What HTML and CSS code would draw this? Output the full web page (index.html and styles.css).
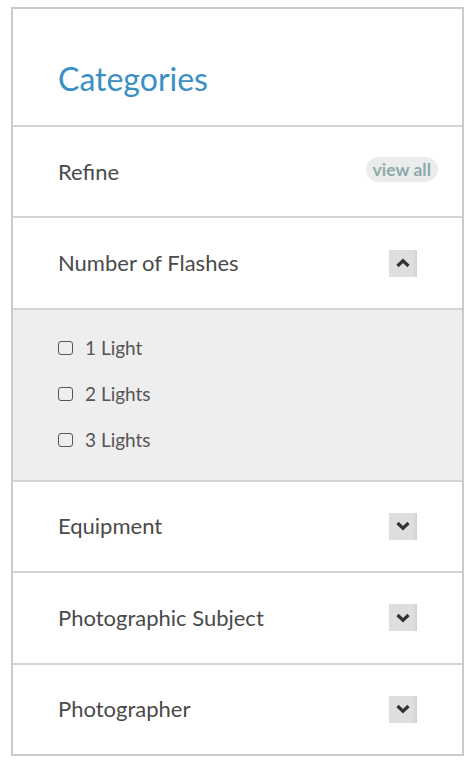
FILE: index.html
```html
<!DOCTYPE html>
<html lang="en">
<head>
<meta charset="utf-8">
<title>Categories</title>
<link rel="stylesheet" href="styles.css">
</head>
<body>
<aside class="panel">
  <header class="panel-head"><h2 class="panel-title">Categories</h2></header>
  <section class="row">
    <span class="row-label">Refine</span>
    <span class="pill">view all</span>
  </section>
  <section class="row">
    <span class="row-label">Number of Flashes</span>
    <span class="toggle"><svg width="16" height="10" viewBox="0 0 16 10"><path d="M2.5 8 L8 2.8 L13.5 8" fill="none" stroke="#333" stroke-width="3.2"/></svg></span>
  </section>
  <ul class="options">
    <li class="option"><span class="box"></span>1 Light</li>
    <li class="option"><span class="box"></span>2 Lights</li>
    <li class="option"><span class="box"></span>3 Lights</li>
  </ul>
  <section class="row">
    <span class="row-label">Equipment</span>
    <span class="toggle"><svg width="16" height="10" viewBox="0 0 16 10"><path d="M2.5 2 L8 7.2 L13.5 2" fill="none" stroke="#333" stroke-width="3.2"/></svg></span>
  </section>
  <section class="row">
    <span class="row-label">Photographic Subject</span>
    <span class="toggle"><svg width="16" height="10" viewBox="0 0 16 10"><path d="M2.5 2 L8 7.2 L13.5 2" fill="none" stroke="#333" stroke-width="3.2"/></svg></span>
  </section>
  <section class="row">
    <span class="row-label">Photographer</span>
    <span class="toggle"><svg width="16" height="10" viewBox="0 0 16 10"><path d="M2.5 2 L8 7.2 L13.5 2" fill="none" stroke="#333" stroke-width="3.2"/></svg></span>
  </section>
</aside>
</body>
</html>
```
FILE: styles.css
```css
html, body {
  margin: 0;
  padding: 0;
  background: #fff;
}
body {
  font-family: Lato, "Open Sans", sans-serif;
  color: #4a4a4a;
}
.panel {
  margin: 7px 0 0 11px;
  width: 449px;
  border: 2px solid #cbcbcb;
}
.panel-head {
  padding: 50px 45px 26px;
  height: 40px;
}
.panel-title {
  margin: 0;
  font-size: 32px;
  line-height: 40px;
  font-weight: 400;
  color: #3a8fc4;
}
.row {
  display: flex;
  align-items: center;
  justify-content: space-between;
  height: 89.4px;
  padding: 0 45px;
  border-top: 2px solid #d4d4d4;
}
.row-label {
  font-size: 22px;
  line-height: 26px;
}
.pill {
  margin-right: -21px;
  margin-top: -5px;
  padding: 0 7px;
  height: 25px;
  line-height: 25px;
  border-radius: 13px;
  background: #ebeded;
  color: #8fa9ab;
  font-size: 17.5px;
  font-weight: 700;
}
.toggle {
  width: 28px;
  height: 27px;
  display: flex;
  align-items: center;
  justify-content: center;
  background: linear-gradient(to right, #dedede 85%, #d2d2d2);
}
.options {
  list-style: none;
  margin: 0;
  padding: 15px 45px 17px;
  background: #eeeeee;
  border-top: 2px solid #d4d4d4;
}
.option {
  display: flex;
  align-items: center;
  height: 46px;
  font-size: 19px;
  color: #555;
}
.box {
  width: 13px;
  height: 12px;
  border: 1.5px solid #555;
  border-radius: 3px;
  margin-right: 12px;
}
```
